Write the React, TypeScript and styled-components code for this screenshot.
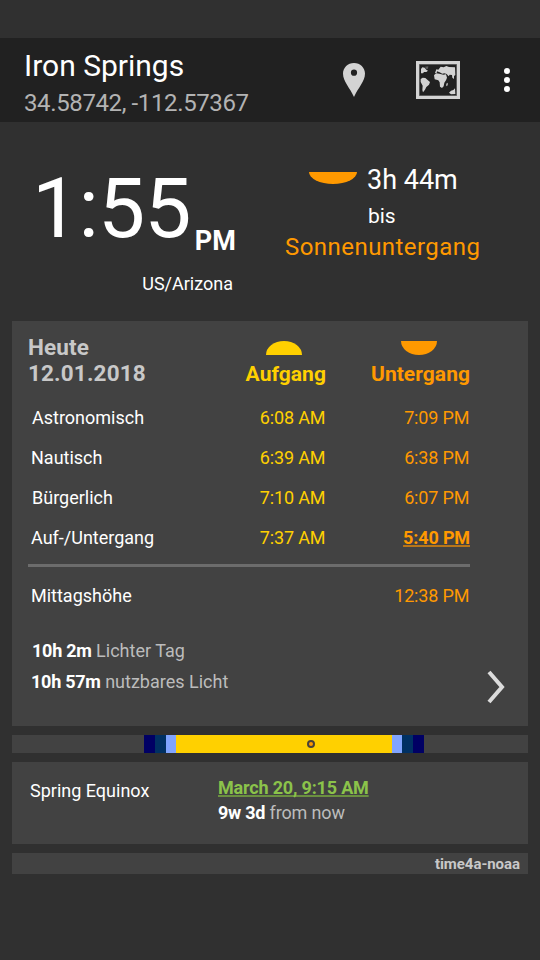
import React from "react";
import styled, { createGlobalStyle } from "styled-components";

const GlobalStyle = createGlobalStyle`
  * { box-sizing: border-box; }
  body {
    margin: 0;
    background: #303030;
    color: #fff;
    font-family: Roboto, "Liberation Sans", sans-serif;
  }
`;

const RISE = "#ffd000";
const SET = "#ff9900";

const Screen = styled.div`
  width: 540px;
  height: 960px;
  padding-top: 38px;
  background: #303030;
  overflow: hidden;
`;

const AppBar = styled.header`
  display: flex;
  height: 84px;
  padding: 0 30px 0 24px;
  background: #212121;
`;

const Place = styled.div`
  flex: 1;
  padding-top: 10px;
  white-space: nowrap;
`;

const PlaceName = styled.h1`
  margin: 0;
  font-size: 30px;
  font-weight: 400;
  line-height: 36px;
`;

const Coordinates = styled.div`
  margin-top: 4px;
  color: #b3b3b3;
  font-size: 24px;
  letter-spacing: -0.38px;
  line-height: 30px;
`;

const Actions = styled.div`
  display: flex;
  align-items: center;
  svg { display: block; }
`;

const PinButton = styled.div`
  margin-right: 51px;
`;

const MapButton = styled.div`
  margin-right: 44px;
`;

const Hero = styled.section`
  display: grid;
  grid-template-columns: 241px 1fr;
  height: 199px;
  padding: 38px 32px 0;
`;

const ClockRow = styled.div`
  display: flex;
  align-items: flex-start;
  height: 113px;
  margin-right: -8px;
`;

const ClockTime = styled.span`
  font-size: 84px;
  letter-spacing: -0.8px;
  line-height: 98px;
`;

const Meridiem = styled.span`
  margin: 65px 0 0 4px;
  font-size: 27px;
  font-weight: 700;
  line-height: 32px;
`;

const Zone = styled.div`
  width: 201px;
  font-size: 18px;
  line-height: 22px;
  text-align: right;
`;

const Countdown = styled.div`
  padding: 3px 0 0 12px;
  white-space: nowrap;
`;

const Remaining = styled.div`
  display: flex;
  align-items: flex-start;
  padding-left: 24px;
  font-size: 27px;
  line-height: 34px;
  svg { display: block; margin: 9px 10px 0 0; }
`;

const Until = styled.div`
  padding-left: 83px;
  font-size: 21px;
  letter-spacing: -0.1px;
  line-height: 26px;
  margin-top: 6px;
`;

const NextEvent = styled.div`
  margin-top: 3px;
  color: ${SET};
  font-size: 24px;
  letter-spacing: 0.45px;
  line-height: 30px;
`;

const Panels = styled.main`
  display: flex;
  flex-direction: column;
  gap: 9px;
  padding: 0 12px;
`;

const Card = styled.section`
  background: #424242;
`;

const DayCard = styled(Card)`
  position: relative;
  height: 405px;
  padding: 13px 58px 0 16px;
`;

const CardHead = styled.div`
  display: grid;
  grid-template-columns: 1fr 90px 144px;
  height: 64px;
`;

const DayTitle = styled.h2`
  margin: 0;
  color: #c8c8c8;
  font-size: 22.5px;
  font-weight: 700;
  letter-spacing: 0.15px;
  line-height: 26px;
`;

const ColumnTitle = styled.div<{ $color: string }>`
  display: flex;
  flex-direction: column;
  align-items: flex-end;
  padding-top: 7px;
  color: ${(p) => p.$color};
  font-size: 21px;
  font-weight: 700;
  letter-spacing: 0.05px;
  line-height: 24px;
  svg { display: block; margin-bottom: 7px; }
`;

const HeadIcon = styled.div<{ $right: number }>`
  height: 21px;
  margin-right: ${(p) => p.$right}px;
`;

const TimeRow = styled.div<{ $indent: number }>`
  display: grid;
  grid-template-columns: 1fr 90px 144px;
  align-items: center;
  height: 40px;
  padding-left: ${(p) => p.$indent}px;
  font-size: 18px;
  line-height: 22px;
  white-space: nowrap;
`;

const Label = styled.span``;

const Time = styled.span<{ $color: string; $next?: boolean }>`
  padding-right: ${(p) => (p.$next ? 0 : 0.6)}px;
  color: ${(p) => p.$color};
  letter-spacing: -0.14px;
  text-align: right;
  ${(p) =>
    p.$next &&
    `font-weight: 700;
     text-decoration: underline;
     text-decoration-color: #b8751a;
     text-decoration-thickness: 2px;
     text-underline-offset: 1px;
     text-decoration-skip-ink: none;`}
`;

const Divider = styled.hr`
  height: 3px;
  margin: 6px 0 9px;
  border: 0;
  background: #6c6c6c;
`;

const Durations = styled.div`
  margin-top: 19px;
`;

const Duration = styled.div<{ $indent: number }>`
  padding-left: ${(p) => p.$indent}px;
  color: #bcbcbc;
  font-size: 18px;
  line-height: 31px;
`;

const Strong = styled.strong`
  color: #fff;
  font-weight: 700;
  letter-spacing: -0.25px;
`;

const NextButton = styled.div`
  position: absolute;
  right: 22px;
  bottom: 22px;
  svg { display: block; }
`;

const DayBar = styled.div`
  position: relative;
  display: flex;
  height: 18px;
  background: #424242;
`;

const Segment = styled.div<{ $width: number; $color: string }>`
  width: ${(p) => p.$width}px;
  background: ${(p) => p.$color};
`;

const NowMarker = styled.div`
  position: absolute;
  left: 295px;
  top: 5px;
  width: 8px;
  height: 8px;
  border: 2px solid #4a4238;
  border-radius: 50%;
  background: ${SET};
`;

const SeasonCard = styled(Card)`
  display: grid;
  grid-template-columns: 188px 1fr;
  height: 82px;
  padding: 13px 18px 0;
  font-size: 18px;
  line-height: 25px;
`;

const SeasonName = styled.div`
  padding-top: 3px;
`;

const SeasonDate = styled.div`
  color: #8bc34a;
  font-weight: 700;
  letter-spacing: -0.18px;
  text-decoration: underline;
  text-decoration-color: #6b9040;
  text-decoration-thickness: 2px;
  text-underline-offset: 1px;
  text-decoration-skip-ink: none;
`;

const SeasonDistance = styled.div`
  color: #bcbcbc;
  letter-spacing: -0.15px;
`;

const Source = styled.footer`
  height: 21px;
  padding-right: 8px;
  background: #424242;
  color: #c8c8c8;
  font-size: 15px;
  font-weight: 700;
  letter-spacing: -0.05px;
  line-height: 22px;
  text-align: right;
`;

const PinIcon = () => (
  <svg width="22" height="34" viewBox="0 0 22 34">
    <path
      fill="#d3d3d3"
      fillRule="evenodd"
      d="M11 0C4.8 0 0 4.7 0 10.6C0 18.5 7 25 11 34C15 25 22 18.5 22 10.6C22 4.7 17.2 0 11 0ZM11 6.6A3.1 3.1 0 1 1 11 12.8A3.1 3.1 0 1 1 11 6.6Z"
    />
  </svg>
);

const MapIcon = () => (
  <svg width="44" height="38" viewBox="0 0 132 114">
    <rect x="4.5" y="4.5" width="123" height="105" fill="none" stroke="#d3d3d3" strokeWidth="9" />
    <rect x="10" y="10" width="112" height="94" fill="none" stroke="#777" strokeWidth="2" />
    <g fill="#d3d3d3">
      <path d="M15 24L19 19L26 20L31 26L36 29L31 33L24 33L21 37L15 37Z" />
      <path d="M27 17L37 16L36 23L31 24Z" opacity=".35" />
      <path d="M14 54L20 50L28 51L34 56L42 63L39 71L31 78L27 86L21 94L19 87L20 74L14 63Z" />
      <path d="M57 36L61 25L67 26L74 17L83 19L91 15L99 18L117 19L118 42L114 45L114 54L109 50L108 42L101 41L98 46L92 39L85 37L79 38L71 34L63 31L62 36Z" />
      <path d="M54 43L60 37L70 38L82 41L90 40L93 50L90 58L85 65L83 76L78 81L72 77L71 64L67 58L56 55Z" />
      <path d="M91 68L95 65L95 73L91 76Z" />
      <path d="M99 95L105 89L112 87L117 82L118 99L105 100Z" />
    </g>
  </svg>
);

const MenuIcon = () => (
  <svg width="6" height="24" viewBox="0 0 6 24" fill="#fff">
    <circle cx="3" cy="3" r="3" />
    <circle cx="3" cy="12" r="3" />
    <circle cx="3" cy="21" r="3" />
  </svg>
);

const SunHalf = ({ width, height, color, up }: { width: number; height: number; color: string; up?: boolean }) => (
  <svg width={width} height={height}>
    <ellipse cx={width / 2} cy={up ? height : 0} rx={width / 2} ry={height} fill={color} />
  </svg>
);

const ChevronIcon = () => (
  <svg width="20" height="34" viewBox="0 0 20 34" fill="none" stroke="#dcdcdc" strokeWidth="4">
    <path d="M3 2L16 17L3 32" />
  </svg>
);

const twilight = [
  { label: "Astronomisch", rise: "6:08 AM", set: "7:09 PM", indent: 4 },
  { label: "Nautisch", rise: "6:39 AM", set: "6:38 PM", indent: 3 },
  { label: "Bürgerlich", rise: "7:10 AM", set: "6:07 PM", indent: 4 },
  { label: "Auf-/Untergang", rise: "7:37 AM", set: "5:40 PM", indent: 3, next: true },
];

const segments: [number, string][] = [
  [132, "transparent"],
  [11, "#000064"],
  [11, "#003063"],
  [10, "#80a4ff"],
  [216, RISE],
  [10, "#80a4ff"],
  [11, "#003063"],
  [11, "#000064"],
];

export default function App() {
  return (
    <>
      <GlobalStyle />
      <Screen>
        <AppBar>
          <Place>
            <PlaceName>Iron Springs</PlaceName>
            <Coordinates>34.58742, -112.57367</Coordinates>
          </Place>
          <Actions>
            <PinButton><PinIcon /></PinButton>
            <MapButton><MapIcon /></MapButton>
            <MenuIcon />
          </Actions>
        </AppBar>

        <Hero>
          <div>
            <ClockRow>
              <ClockTime>1:55</ClockTime>
              <Meridiem>PM</Meridiem>
            </ClockRow>
            <Zone>US/Arizona</Zone>
          </div>
          <Countdown>
            <Remaining>
              <SunHalf width={48} height={12} color={SET} />
              3h 44m
            </Remaining>
            <Until>bis</Until>
            <NextEvent>Sonnenuntergang</NextEvent>
          </Countdown>
        </Hero>

        <Panels>
          <DayCard>
            <CardHead>
              <DayTitle>Heute<br />12.01.2018</DayTitle>
              <ColumnTitle $color={RISE}>
                <HeadIcon $right={24}><SunHalf width={36} height={14} color={RISE} up /></HeadIcon>
                Aufgang
              </ColumnTitle>
              <ColumnTitle $color={SET}>
                <HeadIcon $right={33}><SunHalf width={36} height={14} color={SET} /></HeadIcon>
                Untergang
              </ColumnTitle>
            </CardHead>
            {twilight.map((row) => (
              <TimeRow key={row.label} $indent={row.indent}>
                <Label>{row.label}</Label>
                <Time $color={RISE}>{row.rise}</Time>
                <Time $color={SET} $next={row.next}>{row.set}</Time>
              </TimeRow>
            ))}
            <Divider />
            <TimeRow $indent={3}>
              <Label>Mittagshöhe</Label>
              <span />
              <Time $color={SET}>12:38 PM</Time>
            </TimeRow>
            <Durations>
              <Duration $indent={4}><Strong>10h 2m</Strong> Lichter Tag</Duration>
              <Duration $indent={3}><Strong>10h 57m</Strong> nutzbares Licht</Duration>
            </Durations>
            <NextButton><ChevronIcon /></NextButton>
          </DayCard>

          <DayBar>
            {segments.map(([width, color], i) => (
              <Segment key={i} $width={width} $color={color} />
            ))}
            <NowMarker />
          </DayBar>

          <SeasonCard>
            <SeasonName>Spring Equinox</SeasonName>
            <div>
              <SeasonDate>March 20, 9:15 AM</SeasonDate>
              <SeasonDistance><Strong>9w 3d</Strong> from now</SeasonDistance>
            </div>
          </SeasonCard>

          <Source>time4a-noaa</Source>
        </Panels>
      </Screen>
    </>
  );
}
